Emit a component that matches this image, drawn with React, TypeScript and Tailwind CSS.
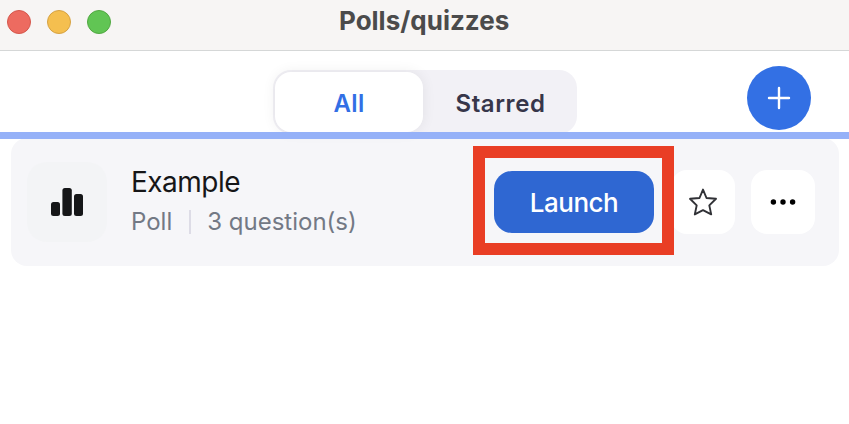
function TitleBar() {
  return (
    <header className="flex h-[51px] items-start border-b border-[#d5d7d7] bg-[#f7f5f4] pl-[7px]">
      <div className="mt-[10px] flex gap-4">
        <span className="size-6 rounded-full border border-[#d5574c] bg-[#ed6b60]" />
        <span className="size-6 rounded-full border border-[#d6a243] bg-[#f5bf4f]" />
        <span className="size-6 rounded-full border border-[#52a842] bg-[#61c554]" />
      </div>
      <h1 className="ml-[228px] mt-[5px] text-[26px] font-bold leading-8 text-[#4b4b4b]">
        Polls/quizzes
      </h1>
    </header>
  );
}

function Toolbar() {
  return (
    <nav className="flex h-[81px] items-start pl-[273px] pt-[15px]">
      <div className="mt-1 flex h-[64px] w-[304px] rounded-[18px] bg-[#f2f1f6] p-0.5">
        <button className="h-[60px] w-[148px] rounded-2xl bg-white pt-1 text-2xl font-semibold tracking-[0.4px] text-[#326fe5] shadow-[0_0_14px_rgba(0,0,0,0.07)]">
          All
        </button>
        <button className="h-[60px] flex-1 pl-[3px] pt-1 text-2xl font-semibold tracking-[0.6px] text-[#37364a]">
          Starred
        </button>
      </div>
      <button aria-label="Add" className="ml-[170px] flex size-16 items-center justify-center rounded-full bg-[#3370e4]">
        <svg width="24" height="24" viewBox="0 0 24 24" fill="none" stroke="white" strokeWidth="2.4" strokeLinecap="round">
          <path d="M2 12H22M12 2V22" />
        </svg>
      </button>
    </nav>
  );
}

function PollRow() {
  return (
    <section className="-mt-px ml-[11px] flex h-32 w-[828px] items-center rounded-2xl bg-[#f6f6f9] pl-4 pr-6">
      <div className="flex size-20 shrink-0 items-center justify-center rounded-[20px] bg-[#f3f4f6]">
        <svg width="32" height="28" viewBox="0 0 32 28" fill="#151618">
          <rect x="0" y="14" width="9" height="14" rx="2.5" />
          <rect x="11.4" y="0" width="9.4" height="28" rx="2.5" />
          <rect x="23" y="6" width="9" height="22" rx="2.5" />
        </svg>
      </div>
      <div className="ml-6 w-[342px] shrink-0 pb-px">
        <h2 className="text-[28px] leading-9 tracking-[-0.5px] text-[#161618]">Example</h2>
        <div className="mt-1 flex h-9 items-center text-2xl text-[#737985]">
          <span>Poll</span>
          <span className="ml-[17px] mr-4 h-6 w-0.5 bg-[#dddce6]" />
          <span>3 question(s)</span>
        </div>
      </div>
      <div className="z-10 -mt-1 flex h-[109px] w-[201px] shrink-0 items-center justify-center border-[12px] border-[#e93e25] pt-[3px]">
        <button className="ml-px h-[62px] w-40 shrink-0 rounded-[18px] bg-[#2f67d2] pt-0.5 text-[26px] font-medium tracking-[-0.5px] text-white">
          Launch
        </button>
      </div>
      <button aria-label="Star" className="-ml-[3px] flex size-16 shrink-0 items-center justify-center rounded-2xl bg-white">
        <svg width="30" height="30" viewBox="0 0 30 30" fill="none" stroke="#303136" strokeWidth="1.9" strokeLinejoin="round">
          <path d="M15 2.6L18.5 11L28 11.8L21.3 18.4L23.2 27.4L15 23.1L6.8 27.4L8.7 18.4L2 11.8L11.5 11Z" />
        </svg>
      </button>
      <button aria-label="More" className="ml-4 flex size-16 shrink-0 items-center justify-center rounded-2xl bg-white">
        <svg width="26" height="6" viewBox="0 0 26 6" fill="black">
          <circle cx="3.4" cy="3" r="2.7" />
          <circle cx="13" cy="3" r="2.7" />
          <circle cx="22.6" cy="3" r="2.7" />
        </svg>
      </button>
    </section>
  );
}

export default function App() {
  return (
    <main className="h-[424px] w-[849px] overflow-hidden bg-white font-['Inter','Liberation_Sans',sans-serif]">
      <TitleBar />
      <Toolbar />
      <div className="relative z-10 h-[7px] bg-[#95b1f8]" />
      <PollRow />
    </main>
  );
}
